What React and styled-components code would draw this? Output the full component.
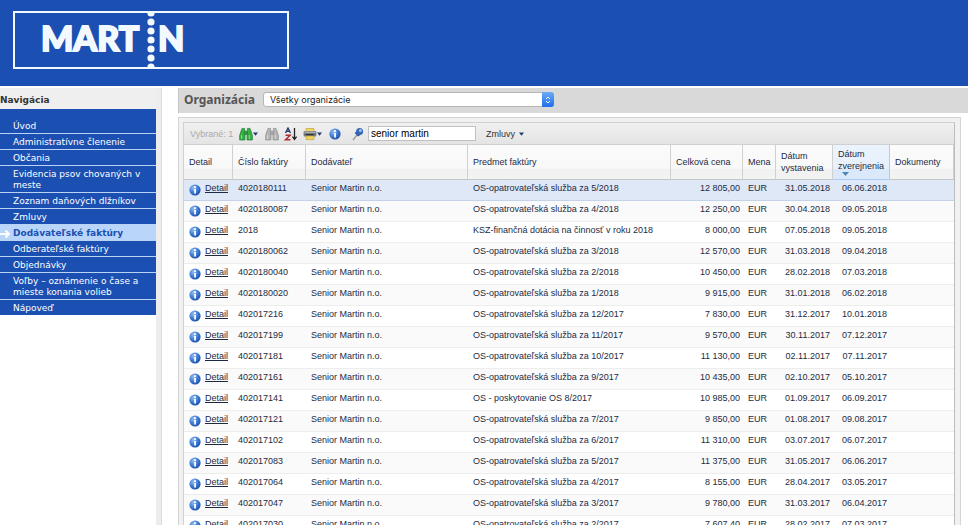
import { useState } from 'react'
import styled, { createGlobalStyle, css } from 'styled-components'

const BLUE = '#1b4fb2'
const SANS = "'Liberation Sans', Arial, sans-serif"
const VERDANA = "'DejaVu Sans', Verdana, sans-serif"

const navigation = [
  'Úvod',
  'Administratívne členenie',
  'Občania',
  'Evidencia psov chovaných v meste',
  'Zoznam daňových dlžníkov',
  'Zmluvy',
  'Dodávateľské faktúry',
  'Odberateľské faktúry',
  'Objednávky',
  'Voľby – oznámenie o čase a mieste konania volieb',
  'Nápoveď'
]

const invoices = [
  ['4020180111', 'OS-opatrovateľská služba za 5/2018', '12 805,00', '31.05.2018', '06.06.2018'],
  ['4020180087', 'OS-opatrovateľská služba za 4/2018', '12 250,00', '30.04.2018', '09.05.2018'],
  ['2018', 'KSZ-finančná dotácia na činnosť v roku 2018', '8 000,00', '07.05.2018', '09.05.2018'],
  ['4020180062', 'OS-opatrovateľská služba za 3/2018', '12 570,00', '31.03.2018', '09.04.2018'],
  ['4020180040', 'OS-opatrovateľská služba za 2/2018', '10 450,00', '28.02.2018', '07.03.2018'],
  ['4020180020', 'OS-opatrovateľská služba za 1/2018', '9 915,00', '31.01.2018', '06.02.2018'],
  ['402017216', 'OS-opatrovateľská služba za 12/2017', '7 830,00', '31.12.2017', '10.01.2018'],
  ['402017199', 'OS-opatrovateľská služba za 11/2017', '9 570,00', '30.11.2017', '07.12.2017'],
  ['402017181', 'OS-opatrovateľská služba za 10/2017', '11 130,00', '02.11.2017', '07.11.2017'],
  ['402017161', 'OS-opatrovateľská služba za 9/2017', '10 435,00', '02.10.2017', '05.10.2017'],
  ['402017141', 'OS - poskytovanie OS 8/2017', '10 985,00', '01.09.2017', '06.09.2017'],
  ['402017121', 'OS-opatrovateľská služba za 7/2017', '9 850,00', '01.08.2017', '09.08.2017'],
  ['402017102', 'OS-opatrovateľská služba za 6/2017', '11 310,00', '03.07.2017', '06.07.2017'],
  ['402017083', 'OS-opatrovateľská služba za 5/2017', '11 375,00', '31.05.2017', '06.06.2017'],
  ['402017064', 'OS-opatrovateľská služba za 4/2017', '8 155,00', '28.04.2017', '03.05.2017'],
  ['402017047', 'OS-opatrovateľská služba za 3/2017', '9 780,00', '31.03.2017', '06.04.2017'],
  ['402017030', 'OS-opatrovateľská služba za 2/2017', '7 607,40', '28.02.2017', '07.03.2017']
]

const Logo = () => (
  <svg width='276' height='58' viewBox='0 0 276 58' role='img' aria-label='Martin'>
    <defs>
      <clipPath id='frame'>
        <rect x='1' y='1' width='274' height='56' />
      </clipPath>
    </defs>
    <rect x='1' y='1' width='274' height='56' fill='none' stroke='#f3faff' strokeWidth='2' />
    <g fill='#f3faff' clipPath='url(#frame)'>
      {[2, 11, 20, 29, 38, 47, 56].map(y => (
        <circle key={y} cx='138' cy={y} r='3.6' />
      ))}
    </g>
    <g
      fill='#f3faff'
      stroke='#f3faff'
      strokeWidth='1.8'
      fontFamily='Lato, sans-serif'
      fontWeight='900'
      fontSize='34'
    >
      <text x='28' y='40'>MART</text>
      <text x='145' y='40'>N</text>
    </g>
  </svg>
)

const InfoIcon = () => (
  <svg width='12' height='12' viewBox='0 0 12 12' aria-hidden='true'>
    <defs>
      <radialGradient id='ball' cx='.35' cy='.3' r='.8'>
        <stop offset='0' stopColor='#8fbcf2' />
        <stop offset='.55' stopColor='#3c78d2' />
        <stop offset='1' stopColor='#17459c' />
      </radialGradient>
    </defs>
    <circle cx='6' cy='6' r='5.6' fill='url(#ball)' />
    <circle cx='6' cy='3.2' r='1.1' fill='#fff' />
    <path d='M4.8 5h2.2v4.6H5.2V5.8h-.4z' fill='#fff' />
  </svg>
)

const BinocularsIcon = ({ fill, stroke }) => (
  <svg width='14' height='14' viewBox='0 0 14 14' aria-hidden='true'>
    <g fill={fill} stroke={stroke} strokeWidth='.6'>
      <path d='M3 1.4h2.6v2.2L6 6v7H.6V8.4L2.2 3.6z' />
      <path d='M11 1.4H8.4v2.2L8 6v7h5.4V8.4l-1.6-4.8z' />
      <path d='M5.8 4.2h2.4v3.2H5.8z' />
    </g>
    <path d='M2.6 8v4M10.4 8v4' stroke='#fff' strokeOpacity='.45' />
  </svg>
)

const SortIcon = () => (
  <svg width='14' height='14' viewBox='0 0 14 14' fill='none' aria-hidden='true'>
    <path d='M1.5 6 4 1l2.5 5M2.4 4.4h3.2' stroke='#26386e' strokeWidth='1.3' />
    <path d='M1.5 8.2h4.6l-4.6 4.6h5' stroke='#b3262c' strokeWidth='1.5' />
    <path d='M10.5 1v11M8.4 9.6l2.1 2.8 2.1-2.8' stroke='#222' strokeWidth='1.3' />
  </svg>
)

const PrinterIcon = () => (
  <svg width='14' height='14' viewBox='0 0 14 14' aria-hidden='true'>
    <path d='M3 1.5h8V5H3z' fill='#f2d660' stroke='#b59b3c' strokeWidth='.6' />
    <rect x='.6' y='4' width='12.8' height='5.6' rx='1' fill='#77797f' />
    <path d='M1.5 5.2h11' stroke='#c4c6cb' />
    <path d='M3 7h8v1.4H3z' fill='#303338' />
    <path d='M3 9h8v3.6H3z' fill='#efd35b' stroke='#b59b3c' strokeWidth='.6' />
  </svg>
)

const PinIcon = () => (
  <svg width='12' height='14' viewBox='0 0 12 14' aria-hidden='true'>
    <path d='M5 8 1 13' stroke='#9a9a9a' strokeWidth='1.3' />
    <path d='M4.5 4.5 8 8.5 6 9.5 2.6 6z' fill='#2c5ba3' />
    <circle cx='7.6' cy='4.6' r='3.5' fill='#3568b4' />
    <circle cx='8.4' cy='3.6' r='1.5' fill='#9fc2ee' />
  </svg>
)

const Caret = () => (
  <svg width='5' height='4' viewBox='0 0 5 4' aria-hidden='true'>
    <path d='M0 .5h5L2.5 3.8z' fill='#1f3c78' />
  </svg>
)

const ActiveArrow = () => (
  <svg width='13' height='10' viewBox='0 0 13 10' fill='none' aria-hidden='true'>
    <path d='M0 5h8M5.5 1.5 9 5 5.500 8.500' stroke='#fff' strokeWidth='2' />
  </svg>
)

const App = () => {
  const [query, setQuery] = useState('senior martin')

  return (
    <Page>
      <GlobalStyle />
      <Header>
        <Logo />
      </Header>
      <Layout>
        <Sidebar>
          <SidebarTitle>Navigácia</SidebarTitle>
          <NavList>
            {navigation.map(label => {
              const active = label === 'Dodávateľské faktúry'
              return (
                <NavItem key={label}>
                  <NavLink href='#' $active={active} aria-current={active ? 'page' : undefined}>
                    {active && <ActiveArrow />}
                    {label}
                  </NavLink>
                </NavItem>
              )
            })}
          </NavList>
        </Sidebar>
        <Main>
          <FilterBar>
            <FilterLabel htmlFor='organization'>Organizácia</FilterLabel>
            <SelectBox>
              <Select id='organization'>
                <option>Všetky organizácie</option>
              </Select>
              <Stepper>
                <svg width='6' height='10' viewBox='0 0 6 10' fill='none' stroke='#fff'>
                  <path d='M1 4 3 2l2 2M1 6l2 2 2-2' />
                </svg>
              </Stepper>
            </SelectBox>
          </FilterBar>
          <Panel>
            <Grid>
              <Toolbar>
                <Selected>Vybrané: 1</Selected>
                <ToolGroup>
                  <ToolButton aria-label='Hľadať'>
                    <BinocularsIcon fill='#35b044' stroke='#176b25' />
                    <Caret />
                  </ToolButton>
                  <ToolButton aria-label='Zrušiť hľadanie'>
                    <BinocularsIcon fill='#b4b4b4' stroke='#858585' />
                  </ToolButton>
                </ToolGroup>
                <ToolButton aria-label='Zoradiť'>
                  <SortIcon />
                </ToolButton>
                <ToolButton aria-label='Tlačiť'>
                  <PrinterIcon />
                  <Caret />
                </ToolButton>
                <SearchGroup>
                  <ToolButton aria-label='Informácie'>
                    <InfoIcon />
                  </ToolButton>
                  <SearchLabel htmlFor='search' aria-label='Rýchle hľadanie'>
                    <PinIcon />
                  </SearchLabel>
                  <SearchInput id='search' value={query} onChange={e => setQuery(e.target.value)} />
                </SearchGroup>
                <MenuButton>
                  Zmluvy
                  <Caret />
                </MenuButton>
              </Toolbar>
              <Table>
                <colgroup>
                  <Col $width={49} />
                  <Col $width={73} />
                  <Col $width={162} />
                  <Col />
                  <Col $width={72} />
                  <Col $width={33} />
                  <Col $width={57} />
                  <Col $width={57} />
                  <Col $width={64} />
                </colgroup>
                <thead>
                  <tr>
                    <Th>Detail</Th>
                    <Th>Číslo faktúry</Th>
                    <Th>Dodávateľ</Th>
                    <Th>Predmet faktúry</Th>
                    <Th>Celková cena</Th>
                    <Th>Mena</Th>
                    <Th>Dátum vystavenia</Th>
                    <Th $sorted aria-sort='descending'>
                      Dátum zverejnenia
                      <SortMark width='7' height='4' viewBox='0 0 7 4'>
                        <path d='M0 0h7L3.5 4z' fill='#4f86b8' />
                      </SortMark>
                    </Th>
                    <Th>Dokumenty</Th>
                  </tr>
                </thead>
                <tbody>
                  {invoices.map(([number, subject, price, issued, published], index) => (
                    <Row key={number} $selected={index === 0}>
                      <Td>
                        <DetailLink href='#'>
                          <InfoIcon />
                          <span>Detail</span>
                        </DetailLink>
                      </Td>
                      <Td>{number}</Td>
                      <Td>Senior Martin n.o.</Td>
                      <Td>{subject}</Td>
                      <Td $right>{price}</Td>
                      <Td>EUR</Td>
                      <Td $right>{issued}</Td>
                      <Td $right>{published}</Td>
                      <Td />
                    </Row>
                  ))}
                </tbody>
              </Table>
            </Grid>
          </Panel>
        </Main>
      </Layout>
    </Page>
  )
}

const GlobalStyle = createGlobalStyle`
  * {
    box-sizing: border-box;
  }

  body {
    margin: 0;
    background: #fff;
    color: #1c2b45;
    font-family: ${SANS};
    font-size: 9px;
  }

  button, input, select {
    margin: 0;
    color: inherit;
    font: inherit;
  }

  svg {
    flex: none;
    display: block;
  }
`

const Page = styled.div`
  display: flex;
  flex-direction: column;
  height: 100vh;
  overflow: hidden;
`

const Header = styled.header`
  flex: none;
  padding: 11px 13px 17px;
  background: ${BLUE};
`

const Layout = styled.div`
  flex: 1;
  min-height: 0;
  display: grid;
  grid-template-columns: 161px minmax(0, 1fr);
  margin-top: 2px;
`

const Sidebar = styled.aside`
  border-right: 5px solid #ededee;
  box-shadow: inset -1px 0 #fff, 1px 0 #dcdcdc;
  font-family: ${VERDANA};
`

const SidebarTitle = styled.h2`
  margin: 0;
  padding: 6px 0 3px;
  background: #efefef;
  color: #333;
  font-size: 9px;
  line-height: 12px;
`

const NavList = styled.ul`
  margin: 0;
  padding: 9px 0 0;
  background: ${BLUE};
  list-style: none;
`

const NavItem = styled.li`
  & + & {
    border-top: 1px solid #b9d3f5;
  }
`

const NavLink = styled.a`
  display: flex;
  align-items: center;
  padding: 3px 14px 1px 13px;
  color: #fff;
  line-height: 11px;
  text-decoration: none;

  ${({ $active }) =>
    $active &&
    css`
      padding-left: 0;
      background: #b9d6fa;
      color: ${BLUE};
      font-weight: bold;
    `}
`

const Main = styled.main`
  padding-left: 17px;
`

const FilterBar = styled.div`
  display: flex;
  align-items: center;
  gap: 8px;
  height: 25px;
  padding-left: 5px;
  padding-bottom: 2px;
  border-left: 1px solid #c4c4c4;
  background: #d9d9d9;
`

const FilterLabel = styled.label`
  color: #555;
  font: bold 12px 'Noto Sans', Tahoma, sans-serif;
`

const SelectBox = styled.div`
  position: relative;
  width: 291px;
`

const Select = styled.select`
  display: block;
  appearance: none;
  width: 100%;
  height: 15px;
  padding: 0 16px 0 6px;
  border: 1px solid #b5b5b5;
  border-radius: 3px;
  background: #fff;
  color: #222;
  font-family: Inter, sans-serif;
`

const Stepper = styled.span`
  position: absolute;
  top: 0;
  right: 0;
  display: flex;
  align-items: center;
  justify-content: center;
  width: 12px;
  height: 15px;
  border-radius: 0 3px 3px 0;
  background: linear-gradient(#6bacf5, #1e6fec);
  pointer-events: none;
`

const Panel = styled.section`
  margin: 4px 7px 0 0;
  padding: 4px 5px 0 4px;
  border: 1px solid #d4d4d4;
  border-bottom: 0;
  background: #f1f1f1;
`

const Grid = styled.div`
  border: 1px solid #d0d0d0;
  border-right-color: #bcbcbc;
  background: #fff;
`

const Toolbar = styled.div`
  display: flex;
  align-items: center;
  gap: 5px;
  height: 22px;
  padding-left: 6px;
  border-bottom: 1px solid #d0d0d0;
  background: linear-gradient(#f0f0f0, #e4e4e4);
`

const Selected = styled.span`
  width: 44px;
  color: #a9a9a9;
`

const ToolGroup = styled.div`
  display: flex;
  gap: 7px;
`

const ToolButton = styled.button`
  display: flex;
  align-items: center;
  padding: 0;
  border: 0;
  background: none;
`

const SearchGroup = styled.div`
  display: flex;
  align-items: center;
  padding-left: 2px;
`

const SearchLabel = styled.label`
  padding: 0 4px 0 11px;
`

const SearchInput = styled.input`
  width: 108px;
  height: 15px;
  padding: 0 2px;
  border: 1px solid #c0c0c0;
  background: #fff;
  color: #000;
  font-size: 10px;
`

const MenuButton = styled(ToolButton)`
  gap: 4px;
  padding-left: 5px;
  color: #333;
`

const Table = styled.table`
  width: 100%;
  border-collapse: separate;
  border-spacing: 0;
  table-layout: fixed;
`

const Col = styled.col`
  width: ${({ $width }) => ($width ? `${$width}px` : 'auto')};
`

const Th = styled.th`
  height: 35px;
  padding: 0 2px 0 5px;
  border-right: 1px solid #d0d0d0;
  border-bottom: 1px solid #c5c5c5;
  background: linear-gradient(#fbfbfb 0%, #f8f8f8 70%, #f1f1f1 72%, #f3f3f3 100%);
  font-weight: normal;
  line-height: 12px;
  text-align: left;

  ${({ $sorted }) =>
    $sorted &&
    css`
      border-color: #aaccf6;
      background: linear-gradient(#ebf3fd 0%, #e6f0fc 70%, #d9e8fb 72%, #dce9fa 100%);
    `}
`

const SortMark = styled.svg`
  margin: 0 4px;
`

const Td = styled.td`
  height: 21px;
  padding: 0 3px 5px 5px;
  border-bottom: 1px solid #ededed;
  line-height: 12px;
  text-align: ${({ $right }) => ($right ? 'right' : 'left')};
  white-space: nowrap;
`

const Row = styled.tr`
  &:nth-child(even) {
    background: #fafafa;
  }

  ${({ $selected }) =>
    $selected &&
    css`
      background: #dfe8f6;

      ${Td} {
        border-color: #c5d3ea;
      }
    `}
`

const DetailLink = styled.a`
  display: flex;
  align-items: flex-start;
  gap: 4px;
  height: 12px;
  color: inherit;
  text-decoration: none;

  span {
    text-decoration: underline;
  }

  svg {
    margin-top: 2px;
  }
`

export default App
